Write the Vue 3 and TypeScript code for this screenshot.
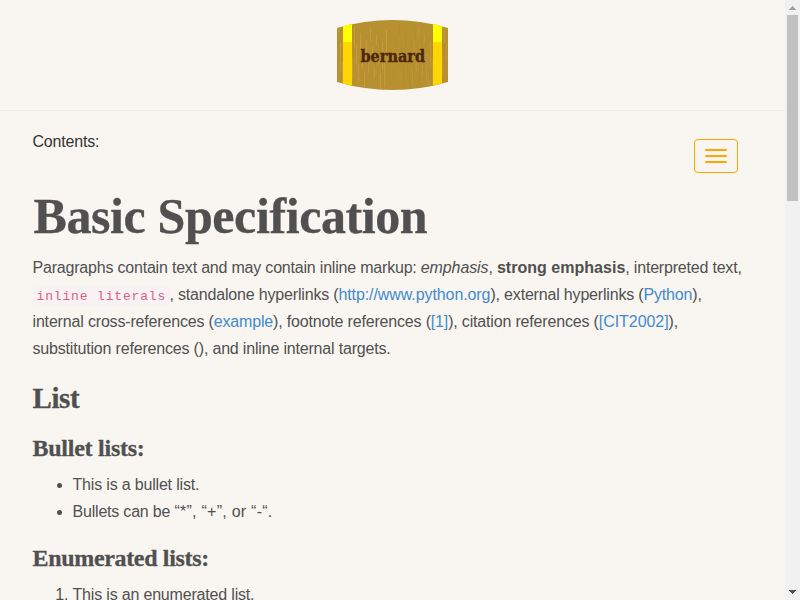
<script setup lang="ts">
const grain = Array.from({ length: 75 }, (_, i) => ({
  x: 1 + ((i * 37) % 109),
  y: 4 + ((i * 23) % 50),
  h: 9 + ((i * 13) % 20),
  c: i % 3 === 0 ? '#d39c50' : i % 3 === 1 ? '#b08a28' : '#c69845',
}))
const bars = [0, 1, 2]
</script>

<template>
  <div class="window">
    <div class="page">
      <header class="header">
        <svg class="logo" width="111" height="70" viewBox="0 0 111 70">
          <defs>
            <clipPath id="barrel"><path d="M0 8Q55.5 -8 111 8V62Q55.5 78 0 62Z" /></clipPath>
          </defs>
          <g clip-path="url(#barrel)">
            <rect width="111" height="70" fill="#b7912f" />
            <rect v-for="(g, i) in grain" :key="i" :x="g.x" :y="g.y" width="1" :height="g.h" :fill="g.c" opacity=".6" />
            <rect x="6" width="9" height="70" fill="#ffd700" />
            <rect x="96" width="9" height="70" fill="#ffd700" />
            <rect x="6" width="9" height="22" fill="#ff0" />
            <rect x="96" width="9" height="22" fill="#ff0" />
          </g>
          <text x="23.5" y="41.5" textLength="64.5" lengthAdjust="spacingAndGlyphs">bernard</text>
        </svg>
      </header>
      <main class="content">
        <div class="top">
          <span class="contents">Contents:</span>
          <button class="toggle" type="button" aria-label="Menu">
            <span v-for="b in bars" :key="b" class="bar"></span>
          </button>
        </div>
        <h1>Basic Specification</h1>
        <p>
          <span class="line first"><span>Paragraphs contain text and may contain inline markup: <em>emphasis</em>, <strong>strong emphasis</strong>, interpreted text,</span></span>
          <span class="line"><code>inline literals</code><span>, standalone hyperlinks (<a class="url">http://www.python.org</a>), external hyperlinks (<a>Python</a>),</span></span>
          <span class="line third"><span>internal cross-references (<a>example</a>), footnote references (<a>[1]</a>), citation references (<a class="cite">[CIT2002]</a>),</span></span>
          <span class="line"><span>substitution references (), and inline internal targets.</span></span>
        </p>
        <h2>List</h2>
        <h3>Bullet lists:</h3>
        <ul>
          <li>This is a bullet list.</li>
          <li><span class="words">Bullets can be </span><span class="quoted">“*”, “+”, or “-“.</span></li>
        </ul>
        <h3 class="enumerated">Enumerated lists:</h3>
        <ol>
          <li>This is an enumerated list.</li>
        </ol>
      </main>
    </div>
    <div class="scrollbar">
      <svg width="15" height="15"><path d="M4 10h7v-1h-1v-1h-1v-1h-1v-1h-1v1h-1v1h-1v1h-1z" fill="#a3a3a3" /></svg>
      <div class="thumb"></div>
      <svg class="down" width="15" height="15"><path d="M4 5h7v1h-1v1h-1v1h-1v1h-1v-1h-1v-1h-1v-1h-1z" fill="#505050" /></svg>
    </div>
  </div>
</template>

<style>
body { margin: 0; overflow: hidden; }
</style>

<style scoped>
.window { display: flex; width: 800px; height: 600px; overflow: hidden; background: #f9f6f1; }
.page { width: 785px; height: 600px; overflow: hidden; color: #505050; font: 16px/27px "Liberation Sans", sans-serif; letter-spacing: -0.18px; }
.header { box-sizing: border-box; height: 111px; padding-top: 20px; display: flex; justify-content: center; border-bottom: 1px solid #eeeeee; }
.logo text { font: bold 17px "DejaVu Serif", serif; letter-spacing: 0; fill: #4d260d; stroke: #4d260d; stroke-width: 0.4px; }
.content { padding: 17px 32px 0 32.5px; }
.top { display: flex; justify-content: space-between; height: 62px; }
.contents { color: #333; }
.toggle { box-sizing: border-box; width: 44px; height: 34px; margin: 11px 15px 0 0; padding: 0; display: flex; flex-direction: column; align-items: center; justify-content: center; gap: 4px; background: transparent; border: 1px solid #ffa500; border-radius: 4px; }
.bar { width: 22px; height: 2px; border-radius: 1px; background: #ffa500; }
h1, h2, h3, p, ul, ol { margin: 0; }
h1, h2, h3 { font-family: "Liberation Serif", serif; font-weight: bold; white-space: nowrap; -webkit-text-stroke: 0.3px #505050; }
h1 { font-size: 50px; line-height: 53px; height: 64px; padding-left: 1px; box-sizing: border-box; letter-spacing: -0.4px; }
p { height: 108px; }
.line { display: flex; height: 27px; white-space: nowrap; }
.first { letter-spacing: -0.2px; }
.third { letter-spacing: -0.17px; }
.cite { letter-spacing: -0.05px; }
em { letter-spacing: -0.12px; }
strong { letter-spacing: 0.03px; }
a { color: #428bca; }
.url { letter-spacing: -0.09px; }
code { box-sizing: border-box; width: 137px; height: 20px; margin-top: 5px; padding: 2px 4px; line-height: 18px; border-radius: 4px; background: #f9f2f4; color: #de5f82; font-family: "Liberation Mono", monospace; font-size: 13px; letter-spacing: 0.84px; }
h2 { font-size: 29px; line-height: 32px; margin-top: 20px; padding-bottom: 1px; letter-spacing: -0.4px; }
h3 { font-size: 24px; line-height: 26px; margin-top: 20px; margin-bottom: 10px; letter-spacing: -0.25px; }
.enumerated { letter-spacing: -0.33px; }
ul, ol { padding-left: 40px; }
.words { letter-spacing: -0.2px; }
.quoted { letter-spacing: 0.25px; }
.scrollbar { display: flex; flex-direction: column; width: 15px; height: 600px; background: #f1f1f1; }
.scrollbar svg { display: block; flex: none; }
.thumb { width: 11px; height: 186px; margin-left: 2px; background: #c1c1c1; }
.down { margin-top: auto; }
</style>
